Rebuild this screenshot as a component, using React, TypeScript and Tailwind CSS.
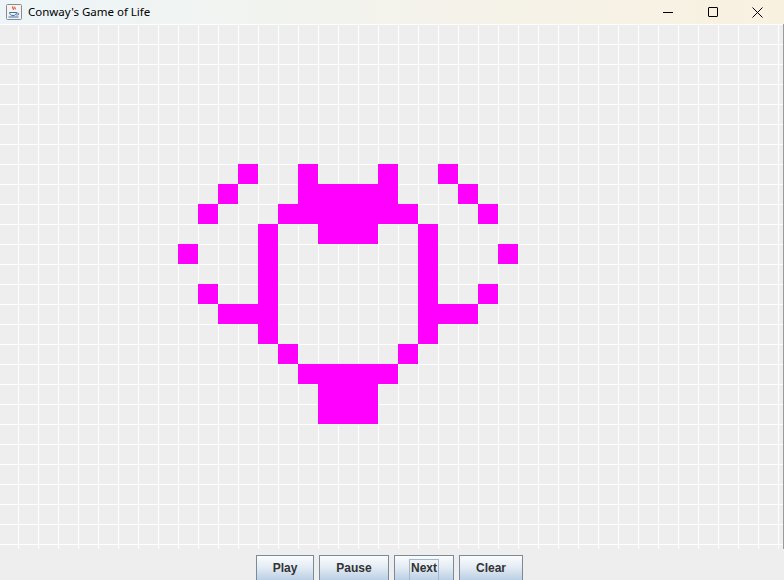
import React from 'react'

// live cells, as [row, col]; col 0 starts at x=-2, row 0 at the top of the board
const live: [number, number][] = [
  [7, 12], [7, 15], [7, 19], [7, 22],
  [8, 11], [8, 15], [8, 16], [8, 17], [8, 18], [8, 19], [8, 23],
  [9, 10], [9, 14], [9, 15], [9, 16], [9, 17], [9, 18], [9, 19], [9, 20], [9, 24],
  [10, 13], [10, 16], [10, 17], [10, 18], [10, 21],
  [11, 9], [11, 13], [11, 21], [11, 25],
  [12, 13], [12, 21],
  [13, 10], [13, 13], [13, 21], [13, 24],
  [14, 11], [14, 12], [14, 13], [14, 21], [14, 22], [14, 23],
  [15, 13], [15, 21],
  [16, 14], [16, 20],
  [17, 15], [17, 16], [17, 17], [17, 18], [17, 19],
  [18, 16], [18, 17], [18, 18],
  [19, 16], [19, 17], [19, 18],
]

const ROWS = 27
const COLS = 40
const alive = new Set(live.map(([r, c]) => `${r}-${c}`))

function JavaIcon() {
  return (
    <svg width="16" height="16" viewBox="0 0 16 16">
      <rect x="0.5" y="0.5" width="15" height="15" rx="1" fill="#f4f4f4" stroke="#8a8a8a" />
      <path d="M7 2.5c-1.2 1.2 1.2 2 0 3.4M9 3c-0.8 0.9 0.8 1.4 0 2.4" stroke="#e2461b" strokeWidth="1.2" fill="none" />
      <path d="M3.5 8.5h7c0 2-1.5 3-3.5 3s-3.5-1-3.5-3z" fill="none" stroke="#3a6fb0" strokeWidth="1" />
      <path d="M10.5 9h1.2a1 1 0 0 1 0 2h-1.5" fill="none" stroke="#3a6fb0" strokeWidth="0.9" />
      <path d="M2.5 13h10" stroke="#3a6fb0" strokeWidth="1" />
    </svg>
  )
}

function Button({ label, width, focused }: { label: string; width: string; focused?: boolean }) {
  return (
    <button
      className={`${width} h-[26px] border border-[#7a8a99] bg-gradient-to-b from-[#fbfcfd] via-[#e1eaf3] to-[#bccfe4] text-[12px] font-bold text-[#333333] flex justify-center pt-[4px]`}
    >
      <span className={`px-[1px] leading-[17px] ${focused ? 'outline outline-1 outline-[#a3b8cc]' : ''}`}>{label}</span>
    </button>
  )
}

export default function App() {
  return (
    <div className="w-[784px] h-[580px] overflow-hidden bg-[#eeeeee] flex flex-col font-['Liberation_Sans',Arial,sans-serif]">
      {/* title bar */}
      <div className="h-[24px] shrink-0 flex items-center bg-gradient-to-r from-[#edf5f8] via-[#f4f3ec] to-[#f9f1e0]">
        <div className="ml-[6px]">
          <JavaIcon />
        </div>
        <span className="ml-[6px] text-[11.5px] text-black font-['Noto_Sans',sans-serif]">Conway's Game of Life</span>
        <div className="ml-auto mr-[4px] flex items-center h-full">
          <div className="w-[45px] h-full flex items-center justify-center">
            <div className="w-[10px] h-px bg-black" />
          </div>
          <div className="w-[45px] h-full flex items-center justify-center">
            <div className="w-[10px] h-[10px] border border-black rounded-[1px]" />
          </div>
          <div className="w-[45px] h-full flex items-center justify-center">
            <svg width="11" height="11" viewBox="0 0 11 11">
              <path d="M0.5 0.5l10 10M10.5 0.5l-10 10" stroke="black" strokeWidth="1" />
            </svg>
          </div>
        </div>
      </div>

      {/* board */}
      <div className="h-[525px] shrink-0 overflow-hidden border-r border-[#9a9a9a]">
        <div className="-ml-[2px] grid grid-cols-[repeat(40,20px)] grid-rows-[repeat(27,20px)]">
          {Array.from({ length: ROWS * COLS }).map((_, i) => {
            const r = Math.floor(i / COLS)
            const c = i % COLS
            const on = alive.has(`${r}-${c}`)
            return (
              <div
                key={i}
                className={on ? 'bg-[#ff00ff]' : 'bg-[#eeeeee] border-l border-t border-white'}
              />
            )
          })}
        </div>
      </div>

      {/* controls */}
      <div className="flex justify-center gap-[5px] pt-[6px] pr-[5px]">
        <Button label="Play" width="w-[58px]" />
        <Button label="Pause" width="w-[70px]" />
        <Button label="Next" width="w-[60px]" focused />
        <Button label="Clear" width="w-[64px]" />
      </div>
    </div>
  )
}
